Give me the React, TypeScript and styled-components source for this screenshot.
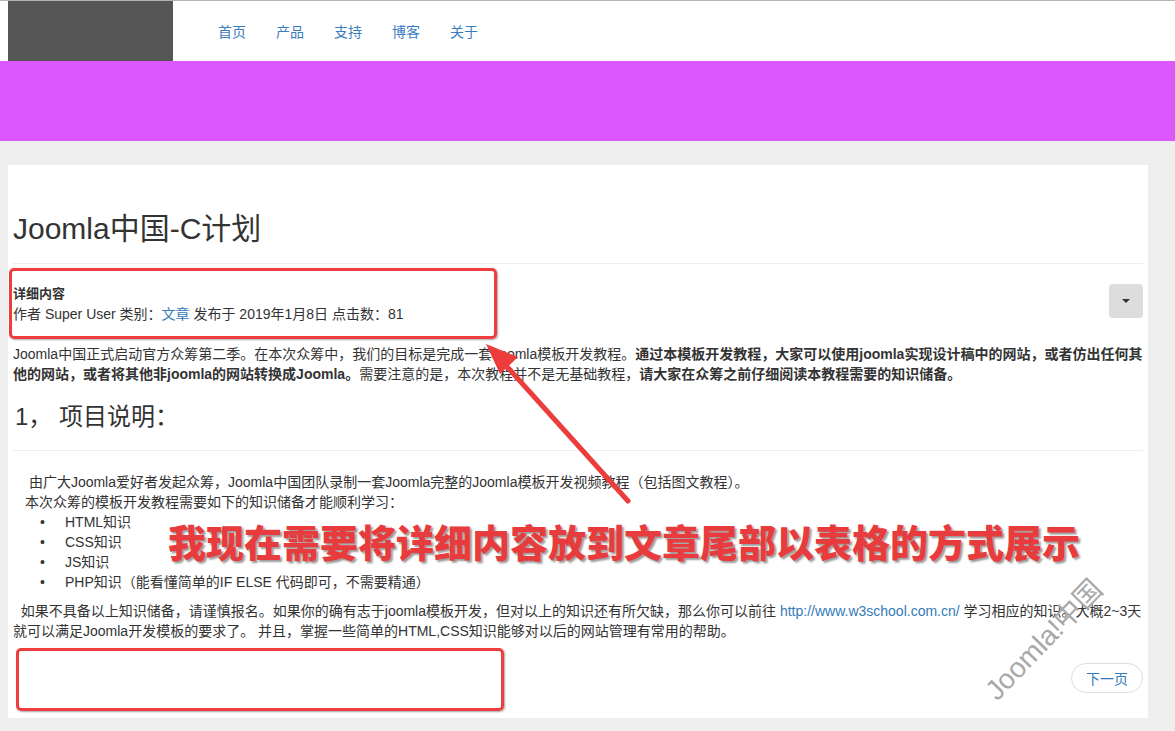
import React from 'react';
import styled, { createGlobalStyle } from 'styled-components';

const GlobalStyle = createGlobalStyle`
  html, body {
    margin: 0;
    padding: 0;
    background: #eeeeee;
  }
  body {
    font-family: "Liberation Sans", "Noto Sans CJK SC", sans-serif;
    font-size: 14px;
    color: #333333;
  }
`;

const Page = styled.div`
  position: relative;
  width: 1175px;
  min-height: 731px;
  overflow: hidden;
  border-top: 1px solid #b4b4b4;
`;

const Header = styled.div`
  display: flex;
  align-items: center;
  height: 60px;
  padding-left: 8px;
  background: #ffffff;
`;

const Logo = styled.div`
  width: 165px;
  height: 60px;
  background: #555555;
`;

const Nav = styled.nav`
  display: flex;
  gap: 30px;
  margin-left: 45px;
`;

const NavLink = styled.a`
  font-size: 14px;
  color: #3a7dbf;
  text-decoration: none;
`;

const Banner = styled.div`
  height: 80px;
  background: #dd57fe;
`;

const Main = styled.div`
  padding: 24px 27px 14px 8px;
`;

const Card = styled.div`
  background: #ffffff;
  padding: 47px 5px 25px 5px;
`;

const Title = styled.h1`
  margin: 0;
  padding-bottom: 18px;
  border-bottom: 1px solid #eeeeee;
  font-size: 30px;
  font-weight: 400;
  line-height: 33px;
  color: #333333;
`;

const MetaRow = styled.div`
  display: flex;
  justify-content: space-between;
  align-items: flex-start;
  margin-top: 20px;
  line-height: 20px;
`;

const MetaLabel = styled.div`
  font-size: 13px;
  font-weight: 700;
`;

const Link = styled.a`
  color: #337ab7;
  text-decoration: none;
`;

const DropButton = styled.button`
  display: flex;
  align-items: center;
  justify-content: center;
  width: 34px;
  height: 34px;
  border: none;
  border-radius: 4px;
  background: #dddddd;
  padding: 0;
`;

const Caret = styled.span`
  width: 0;
  height: 0;
  border-left: 4px solid transparent;
  border-right: 4px solid transparent;
  border-top: 4px solid #333333;
`;

const Para = styled.p<{ $top?: number }>`
  margin: ${(p) => (p.$top === undefined ? 20 : p.$top)}px 0 0;
  line-height: 20px;
`;

const SectionTitle = styled.h2`
  margin: 20px 0 0;
  padding: 0 0 20px 2px;
  border-bottom: 1px solid #eeeeee;
  font-size: 24px;
  font-weight: 400;
  line-height: 26px;
`;

const Block = styled.div`
  margin: 21px 0 0 12px;
  line-height: 20px;
`;

const List = styled.ul`
  list-style: none;
  margin: 0 0 9px;
  padding: 0 0 0 15px;
`;

const Item = styled.li`
  display: flex;
`;

const Bullet = styled.span`
  width: 25px;
  &::before {
    content: '•';
  }
`;

const Pager = styled.div`
  display: flex;
  justify-content: flex-end;
  margin-top: 22px;
`;

const PagerButton = styled.a`
  display: flex;
  align-items: center;
  justify-content: center;
  width: 70px;
  height: 28px;
  border: 1px solid #dddddd;
  border-radius: 15px;
  color: #337ab7;
  text-decoration: none;
`;

const MarkBox = styled.div<{ $l: number; $t: number; $w: number; $h: number }>`
  position: absolute;
  left: ${(p) => p.$l}px;
  top: ${(p) => p.$t}px;
  width: ${(p) => p.$w}px;
  height: ${(p) => p.$h}px;
  box-sizing: border-box;
  border: 3px solid #ee3d3d;
  border-radius: 5px;
  box-shadow: 1px 1px 2px rgba(0, 0, 0, 0.35);
  pointer-events: none;
`;

const ArrowSvg = styled.svg`
  position: absolute;
  left: 0;
  top: 0;
  pointer-events: none;
`;

const Note = styled.div`
  position: absolute;
  left: 168px;
  top: 516px;
  font-family: "Noto Sans CJK SC", sans-serif;
  font-size: 38px;
  font-weight: 900;
  line-height: 48px;
  white-space: nowrap;
  color: #e83b3d;
  -webkit-text-stroke: 4px #ffffff;
  paint-order: stroke fill;
  text-shadow: 2px 2px 2px rgba(0, 0, 0, 0.4);
`;

const Watermark = styled.div`
  position: absolute;
  left: 1042px;
  top: 637px;
  transform: translate(-50%, -50%) rotate(-46deg);
  font-family: "Liberation Sans", "Noto Sans CJK SC", sans-serif;
  font-size: 28px;
  white-space: nowrap;
  color: #a8a8a8;
  pointer-events: none;
`;

const skills = ['HTML知识', 'CSS知识', 'JS知识', 'PHP知识（能看懂简单的IF ELSE 代码即可，不需要精通）'];

export default function App() {
  return (
    <Page>
      <GlobalStyle />
      <Header>
        <Logo />
        <Nav>
          <NavLink href="#">首页</NavLink>
          <NavLink href="#">产品</NavLink>
          <NavLink href="#">支持</NavLink>
          <NavLink href="#">博客</NavLink>
          <NavLink href="#">关于</NavLink>
        </Nav>
      </Header>
      <Banner />
      <Main>
        <Card>
          <Title>Joomla中国-C计划</Title>
          <MetaRow>
            <div>
              <MetaLabel>详细内容</MetaLabel>
              <div>
                作者 Super User 类别：<Link href="#">文章</Link> 发布于 2019年1月8日 点击数：81
              </div>
            </div>
            <DropButton>
              <Caret />
            </DropButton>
          </MetaRow>
          <Para>
            Joomla中国正式启动官方众筹第二季。在本次众筹中，我们的目标是完成一套Joomla模板开发教程。
            <strong>通过本模板开发教程，大家可以使用joomla实现设计稿中的网站，或者仿出任何其他的网站，或者将其他非joomla的网站转换成Joomla。</strong>
            需要注意的是，本次教程并不是无基础教程，
            <strong>请大家在众筹之前仔细阅读本教程需要的知识储备。</strong>
          </Para>
          <SectionTitle>1， 项目说明：</SectionTitle>
          <Block>
            <div>&nbsp;由广大Joomla爱好者发起众筹，Joomla中国团队录制一套Joomla完整的Joomla模板开发视频教程（包括图文教程）。</div>
            <div>本次众筹的模板开发教程需要如下的知识储备才能顺利学习：</div>
            <List>
              {skills.map((s) => (
                <Item key={s}>
                  <Bullet />
                  <span>{s}</span>
                </Item>
              ))}
            </List>
          </Block>
          <Para $top={0}>
            &nbsp;&nbsp;如果不具备以上知识储备，请谨慎报名。如果你的确有志于joomla模板开发，但对以上的知识还有所欠缺，那么你可以前往{' '}
            <Link href="#">http://www.w3school.com.cn/</Link> 学习相应的知识。大概2~3天就可以满足Joomla开发模板的要求了。 并且，掌握一些简单的HTML,CSS知识能够对以后的网站管理有常用的帮助。
          </Para>
          <Pager>
            <PagerButton href="#">下一页</PagerButton>
          </Pager>
        </Card>
      </Main>

      <MarkBox $l={9} $t={267} $w={488} $h={71} />
      <MarkBox $l={16} $t={647} $w={488} $h={63} />
      <ArrowSvg width="1175" height="731" viewBox="0 0 1175 731">
        <line x1="628" y1="500" x2="502" y2="360" stroke="#ec3c3c" strokeWidth="5" strokeLinecap="round" />
        <polygon points="486,343 518,356 500,373" fill="#ec3c3c" />
      </ArrowSvg>
      <Note>我现在需要将详细内容放到文章尾部以表格的方式展示</Note>
      <Watermark>Joomla!中国</Watermark>
    </Page>
  );
}
